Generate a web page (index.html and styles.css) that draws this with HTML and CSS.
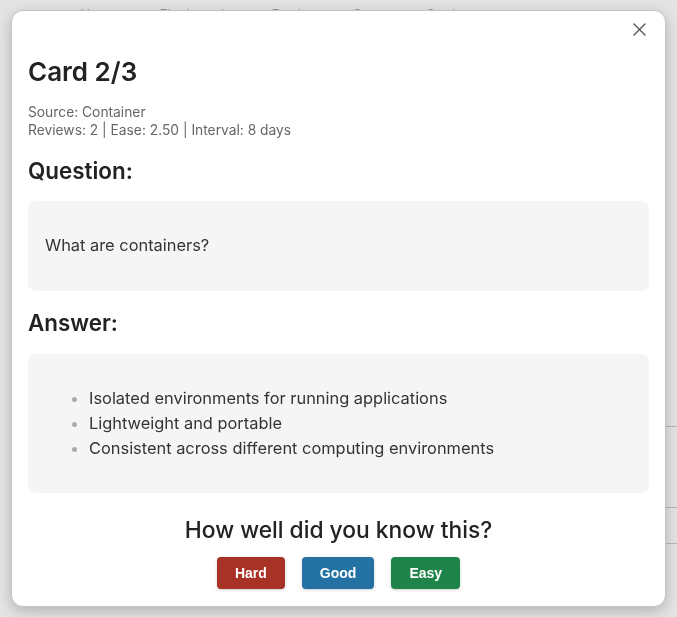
FILE: index.html
```html
<!DOCTYPE html>
<html lang="en">
<head>
<meta charset="utf-8">
<title>Card 2/3</title>
<link rel="stylesheet" href="styles.css">
</head>
<body>
<div class="page">
  <div class="page-nav">
    <span>Home</span><span>Flashcards</span><span>Decks</span><span>Stats</span><span>Settings</span>
  </div>
  <div class="page-table">
    <div class="row"></div>
    <div class="row"></div>
    <div class="row"></div>
  </div>
</div>

<div class="overlay">
  <div class="modal">
    <button class="close" aria-label="Close">
      <svg width="13" height="13" viewBox="0 0 13 13"><path d="M1 1 L12 12 M12 1 L1 12" stroke="#555" stroke-width="1.4" fill="none" stroke-linecap="round"/></svg>
    </button>
    <h2 class="title">Card 2/3</h2>
    <div class="meta">
      <div>Source: Container</div>
      <div>Reviews: 2 | Ease: 2.50 | Interval: 8 days</div>
    </div>
    <h3 class="section">Question:</h3>
    <div class="box">
      <p>What are containers?</p>
    </div>
    <h3 class="section answer">Answer:</h3>
    <div class="box">
      <ul>
        <li>Isolated environments for running applications</li>
        <li>Lightweight and portable</li>
        <li>Consistent across different computing environments</li>
      </ul>
    </div>
    <h3 class="prompt">How well did you know this?</h3>
    <div class="buttons">
      <button class="btn hard">Hard</button>
      <button class="btn good">Good</button>
      <button class="btn easy">Easy</button>
    </div>
  </div>
</div>
</body>
</html>
```

FILE: styles.css
```css
* { box-sizing: border-box; }

html, body {
  margin: 0;
  padding: 0;
  height: 100%;
}

body {
  font-family: Inter, "Noto Sans", sans-serif;
  background: #ffffff;
  color: #333;
  overflow: hidden;
}

.page {
  padding: 7px 0 0 80px;
}

.page-nav {
  display: flex;
  gap: 40px;
  font-size: 14px;
  line-height: 16px;
  color: #aaa;
}

.page-table {
  margin-top: 403px;
}

.page-table .row {
  height: 1px;
  background: #cfcfcf;
}
.page-table .row:nth-child(2) { margin-top: 80px; }
.page-table .row:nth-child(3) { margin-top: 35px; }

.overlay {
  position: fixed;
  inset: 0;
  background: rgba(0, 0, 0, 0.11);
  display: flex;
  align-items: center;
  justify-content: center;
}

.modal {
  position: relative;
  width: 655px;
  background: #fff;
  border: 1px solid #c4c4c4;
  border-radius: 12px;
  padding: 16px 16px 17px;
  box-shadow: 0 4px 14px rgba(0, 0, 0, 0.22);
}

.close {
  position: absolute;
  top: 12px;
  right: 19px;
  width: 13px;
  height: 13px;
  padding: 0;
  border: 0;
  background: none;
  display: flex;
}

.title {
  margin: 29px 0 0;
  font-size: 26px;
  line-height: 31px;
  font-weight: 600;
  color: #222;
}

.meta {
  margin-top: 16px;
  font-size: 13.8px;
  line-height: 18px;
  color: #666;
}

.section {
  margin: 19px 0 18px;
  font-size: 22.4px;
  line-height: 25px;
  font-weight: 600;
  color: #222;
}

.section.answer {
  margin-bottom: 19px;
}

.box {
  background: #f5f5f5;
  border-radius: 8px;
  padding: 16px 17px;
  font-size: 16.4px;
  line-height: 25px;
  color: #333;
}

.box p {
  margin: 16px 0 17px;
}

.box ul {
  margin: 16px 0;
  padding-left: 44px;
}

.box li::marker {
  color: #aaa;
}

.prompt {
  margin: 24px 0 15px;
  text-align: center;
  font-size: 22.8px;
  line-height: 25px;
  font-weight: 500;
  color: #222;
}

.buttons {
  display: flex;
  justify-content: center;
  gap: 17px;
}

.btn {
  height: 32px;
  padding: 0 18px;
  border: 0;
  border-radius: 4px;
  font-family: "Liberation Sans", Arial, sans-serif;
  font-weight: 700;
  font-size: 14px;
  color: #fff;
  box-shadow: 0 1px 3px rgba(0, 0, 0, 0.2);
}

.hard { background: #a93226; }
.good { background: #2471a3; }
.easy { background: #1e8449; }
```
